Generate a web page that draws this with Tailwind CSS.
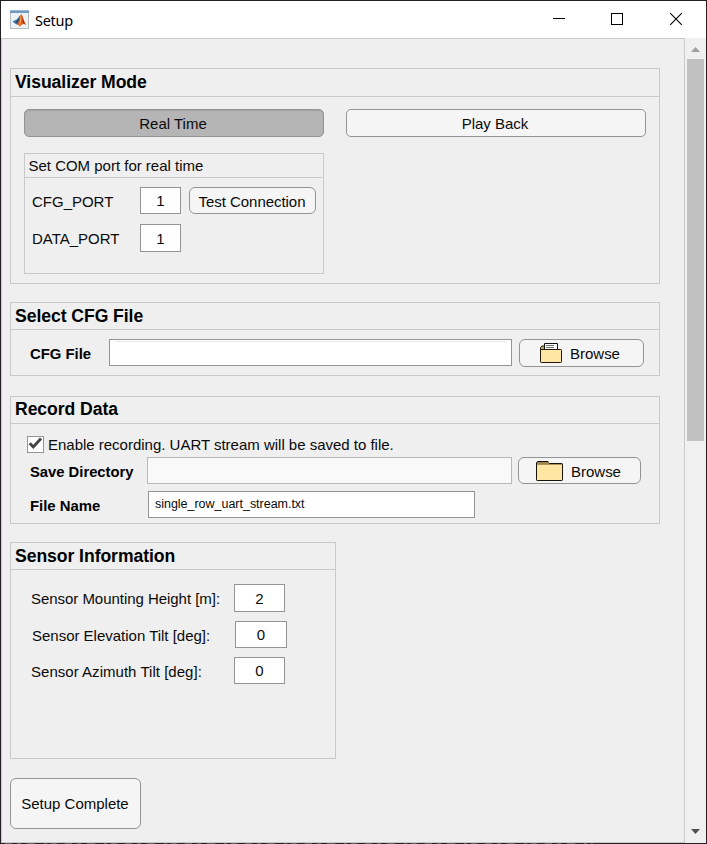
<!DOCTYPE html>
<html lang="en">
<head>
<meta charset="utf-8">
<title>Setup</title>
<script src="https://cdn.jsdelivr.net/npm/@tailwindcss/browser@4"></script>
</head>
<body class="w-[707px] h-[844px] overflow-hidden bg-[#231f24] p-px font-['Liberation_Sans',Arial,sans-serif] text-[15px] tracking-[-0.01px] text-[#0a0a0a]">
<div class="relative w-[705px] h-[842px] flex flex-col bg-[#efefef]">
  <header class="h-[37px] shrink-0 bg-white flex items-center">
    <svg class="ml-[9px] mt-px" width="20" height="20" viewBox="0 0 20 20">
      <rect x="0.5" y="0.5" width="18" height="18" fill="#eef1f4" stroke="#b5bcc4"/>
      <rect x="0" y="0" width="19" height="3" fill="#7299bd"/>
      <rect x="0" y="0" width="19" height="1" fill="#98b8d4"/>
      <path d="M2.500 11.400L7 9.200L10.500 5L9 13L6.500 14.500Z" fill="#3a77ad"/>
      <path d="M5 12.500L7.500 9.800L10 6L8.500 14Z" fill="#264b74"/>
      <path d="M6.500 14.800C9 13.500 9.500 4.700 11.200 4.300C12.700 4.900 14 12 16.300 15.200C13.800 13.300 12.200 13.800 9.800 16.800C9 15.400 8 14.300 6.500 14.800Z" fill="#d95b22"/>
      <path d="M10.900 4.800C11.800 7 11 13 9.800 16.300C8.800 14.500 9.800 10 10.900 4.800Z" fill="#f5a544"/>
      <path d="M12 6C13 8.500 14 12.800 15.800 14.700L13 13Z" fill="#9c2a16"/>
    </svg>
    <span class="ml-[5px] mt-px font-['Noto_Sans','Open_Sans',sans-serif] text-[14.500px] tracking-[-0.3px] leading-5 text-black">Setup</span>
    <svg class="ml-auto mr-[23px] -mt-px" width="132" height="16" viewBox="0 0 132 16" fill="none" stroke="#000">
      <path d="M2 7.500H14"/>
      <rect x="60.500" y="2.500" width="11" height="11"/>
      <path d="M119.200 2.200L130.800 13.800M130.800 2.200L119.200 13.800" stroke-width="1.100"/>
    </svg>
  </header>

  <div class="flex grow">
    <main class="w-[684px] border border-[#c9c9c9] pl-[8px] pt-[29px]">
      <section class="w-[650px] h-[216px] border border-[#c9c9c9]">
        <h2 class="h-[28px] border-b border-[#c9c9c9] pl-1 text-[17.600px] tracking-[-0.06px] leading-[27px] font-bold text-black">Visualizer Mode</h2>
        <div class="flex gap-[22px] pl-[13px] pt-[12px]">
          <button class="w-[300px] h-[28px] rounded-[5px] border border-[#949494] bg-[#b5b5b5] pt-[2px] pr-[2px] shadow-[inset_0_1px_1px_#9f9f9f]">Real Time</button>
          <button class="w-[300px] h-[28px] rounded-[5px] border border-[#949494] bg-[#f5f5f5] pt-[2px] pr-[2px]">Play Back</button>
        </div>
        <div class="ml-[13px] mt-[16px] w-[300px] h-[121px] border border-[#c9c9c9]">
          <h3 class="w-[297px] h-[24px] border-b border-[#c9c9c9] pl-[3.500px] leading-[24px]">Set COM port for real time</h3>
          <div class="flex pl-[7px] pt-[9px] h-[36px]">
            <span class="w-[108px] leading-[30px]">CFG_PORT</span>
            <span class="w-[41px] h-[27px] border border-[#949494] bg-white text-center leading-[26px]">1</span>
            <button class="ml-[8px] w-[127px] h-[27px] shrink-0 rounded-[6px] border border-[#949494] bg-[#f5f5f5] pt-[3px] pr-px whitespace-nowrap tracking-[-0.04px]">Test Connection</button>
          </div>
          <div class="flex h-[38px] pl-[7px] pt-[10px]">
            <span class="w-[108px] leading-[30px]">DATA_PORT</span>
            <span class="w-[41px] h-[28px] border border-[#949494] bg-white text-center leading-[27px]">1</span>
          </div>
        </div>
      </section>

      <section class="mt-[18px] w-[650px] h-[74px] border border-[#c9c9c9]">
        <h2 class="h-[27px] border-b border-[#c9c9c9] pl-1 text-[17.600px] tracking-[-0.06px] leading-[27px] font-bold text-black">Select CFG File</h2>
        <div class="flex h-[37px] items-start pl-[19px] pt-[9px]">
          <span class="w-[79px] font-bold leading-[30px] text-[14.900px] text-black">CFG File</span>
          <span class="w-[403px] h-[27px] border border-[#949494] bg-white px-[5px] pt-px"><span class="block h-px bg-[#e6e6e6]"></span></span>
          <button class="ml-[7px] w-[125px] h-[28px] rounded-[6px] border border-[#949494] bg-[#f5f5f5] flex items-center pl-[20px]">
            <svg width="23" height="21" viewBox="0 0 23 21">
              <path d="M.5 8V4.500L2 3H5V7" fill="#c2a566" stroke="#20180a"/>
              <path d="M4.500 7V.5H17.500V7" fill="#fff" stroke="#111"/>
              <path d="M6 2.500H14M6 4.500H14" stroke="#777"/>
              <rect x=".5" y="6.500" width="21" height="13" rx=".7" fill="#ffe6a2" stroke="#20180a"/>
            </svg>
            <span class="ml-[7px] mt-[2px]">Browse</span>
          </button>
        </div>
      </section>

      <section class="mt-[20px] w-[650px] h-[128px] border border-[#c9c9c9]">
        <h2 class="h-[27px] border-b border-[#c9c9c9] pl-1 text-[17.600px] tracking-[-0.06px] leading-[24px] font-bold text-black">Record Data</h2>
        <div class="flex h-[33px] pl-[16px] pt-[12px]">
          <svg width="17" height="17" viewBox="0 0 17 17">
            <rect x=".5" y=".5" width="16" height="16" fill="#fff" stroke="#949494"/>
            <path d="M2.700 7.300L6.300 11L14 2.500" fill="none" stroke="#444" stroke-width="2.900"/>
          </svg>
          <span class="ml-[4px] leading-[17px] whitespace-nowrap">Enable recording. UART stream will be saved to file.</span>
        </div>
        <div class="flex h-[27px] items-start pl-[19px]">
          <span class="w-[117px] font-bold leading-[30px] text-[14.800px] text-black whitespace-nowrap">Save Directory</span>
          <span class="w-[365px] h-[27px] border border-[#b8b8b8] bg-[#f9f9f9]"></span>
          <button class="ml-[6px] w-[123px] h-[27px] rounded-[6px] border border-[#949494] bg-[#f5f5f5] flex items-center pl-[17px]">
            <svg class="mt-[2px]" width="27" height="21" viewBox="0 0 27 21" stroke="#17130a">
              <path d="M.5 6V1.500L1.500.5H12L13.500 3.500V6Z" fill="#9c844e"/>
              <rect x=".5" y="2.500" width="26" height="17" rx=".7" fill="#b0935a"/>
              <path d="M1 4H26V19H1Z" fill="#ffe6a2" stroke="none"/>
              <path d="M1 1H12.500L13.500 3H1Z" fill="#9c844e" stroke="none"/>
            </svg>
            <span class="ml-[8px] mt-[3px]">Browse</span>
          </button>
        </div>
        <div class="flex h-[34px] items-start pl-[19px] pt-[7px]">
          <span class="w-[118px] font-bold leading-[30px] text-[14.900px] text-black">File Name</span>
          <span class="w-[327px] h-[27px] border border-[#949494] bg-white pl-[6px] text-[12.500px] tracking-[-0.02px] leading-[24px]">single_row_uart_stream.txt</span>
        </div>
      </section>

      <section class="mt-[18px] w-[326px] h-[217px] border border-[#c9c9c9]">
        <h2 class="h-[27px] border-b border-[#c9c9c9] pl-1 text-[17.600px] tracking-[-0.06px] leading-[27px] font-bold text-black">Sensor Information</h2>
        <div class="flex h-[51px] pl-[20px] pt-[14px]">
          <span class="w-[203px] leading-[30px] tracking-[-0.04px]">Sensor Mounting Height [m]:</span>
          <span class="w-[51px] h-[28px] border border-[#949494] bg-white text-center leading-[28px]">2</span>
        </div>
        <div class="flex h-[36px] pl-[21px]">
          <span class="w-[203px] leading-[30px]">Sensor Elevation Tilt [deg]:</span>
          <span class="w-[52px] h-[27px] border border-[#949494] bg-white text-center leading-[26px]">0</span>
        </div>
        <div class="flex pl-[20px]">
          <span class="w-[203px] leading-[30px] tracking-[0.03px]">Sensor Azimuth Tilt [deg]:</span>
          <span class="w-[51px] h-[27px] border border-[#949494] bg-white text-center leading-[26px]">0</span>
        </div>
      </section>

      <button class="mt-[19px] block w-[131px] h-[51px] rounded-[6px] border border-[#949494] bg-[#f5f5f5] pt-px pr-px">Setup Complete</button>
    </main>

    <aside class="w-[21px] flex flex-col items-center bg-[#f0f0f0] pt-[9px] pb-[9px]">
      <svg width="9" height="5" viewBox="0 0 9 5"><path d="M0 5L4.500 0L9 5Z" fill="#a0a0a0"/></svg>
      <div class="mt-[7px] w-[17px] h-[382px] bg-[#c1c1c1]"></div>
      <svg class="mt-auto" width="9" height="5" viewBox="0 0 9 5"><path d="M0 0H9L4.500 5Z" fill="#505050"/></svg>
    </aside>
  </div>
</div>
<svg class="block" width="592" height="1" viewBox="0 0 592 1"><path d="M4 .5H592" stroke="#5d595e" stroke-dasharray="7 5 4 6 8 9 3 4 6 8"/></svg>
</body>
</html>
